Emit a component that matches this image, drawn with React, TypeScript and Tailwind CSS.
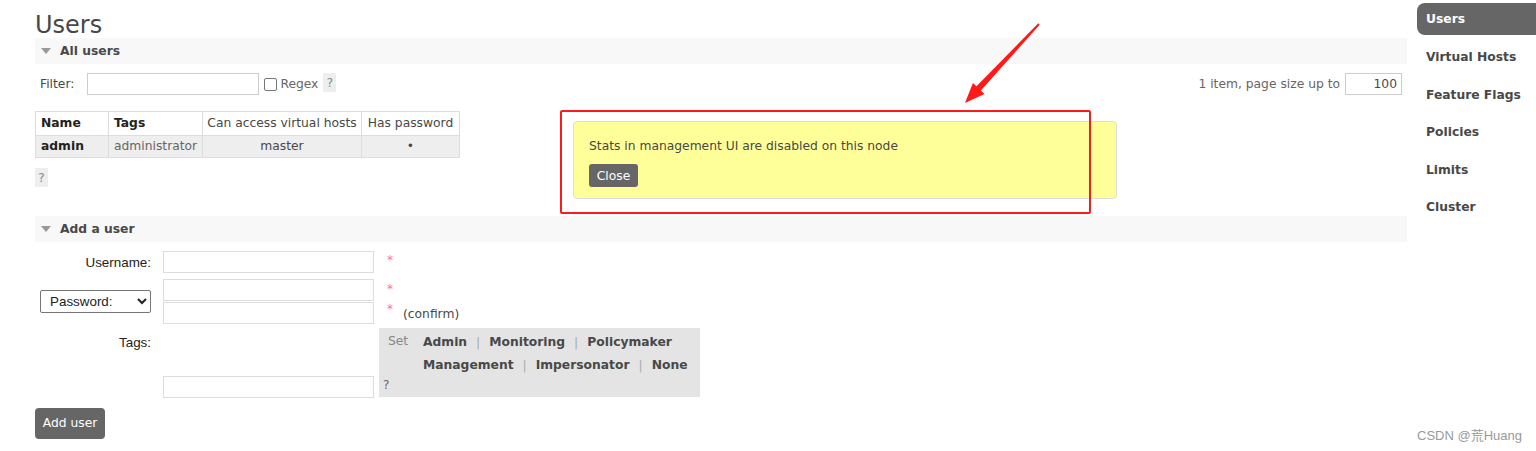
import React from "react";

const nav = ["Users", "Virtual Hosts", "Feature Flags", "Policies", "Limits", "Cluster"];

function SectionBar({ title }: { title: string }) {
  return (
    <div className="h-[26px] bg-[#f8f8f8] flex items-center pl-[6px]">
      <span className="inline-block w-0 h-0 border-l-[5px] border-r-[5px] border-t-[6px] border-l-transparent border-r-transparent border-t-[#999] mr-[9px]" />
      <span className="font-bold text-[12.3px] text-[#484848]">{title}</span>
    </div>
  );
}

function Help() {
  return (
    <span className="inline-flex w-[13px] h-[19px] bg-[#eee] text-[#888] text-[12px] items-center justify-center">?</span>
  );
}

function Field({ className = "" }: { className?: string }) {
  return (
    <input
      className={
        "block w-[211px] h-[22px] border border-[#ddd] bg-white outline-none px-1 " + className
      }
    />
  );
}

function Star({ className = "" }: { className?: string }) {
  return <span className={"text-[#f77] text-[12px] leading-none " + className}>*</span>;
}

const tagRow1 = ["Admin", "Monitoring", "Policymaker"];
const tagRow2 = ["Management", "Impersonator", "None"];

function TagLinks({ items }: { items: string[] }) {
  return (
    <div className="h-[23px] flex items-center">
      {items.map((t, i) => (
        <React.Fragment key={t}>
          {i > 0 && <span className="text-[#aaa] font-normal mx-[9px]">|</span>}
          <span className="font-bold text-[#484848]">{t}</span>
        </React.Fragment>
      ))}
    </div>
  );
}

export default function App() {
  return (
    <div
      className="relative w-[1536px] h-[451px] bg-white overflow-hidden text-[12.3px] text-[#484848]"
      style={{ fontFamily: '"DejaVu Sans", Verdana, sans-serif' }}
    >
      <div className="flex">
        {/* main column */}
        <div className="ml-[35px] w-[1372px]">
          <h1 className="h-[38px] text-[24px] leading-[50px] font-normal text-[#484848]">Users</h1>

          <SectionBar title="All users" />

          <div className="mt-[9px] h-[22px] flex items-center pl-[5px] pr-[5px]">
            <span>Filter:</span>
            <input className="ml-[13px] w-[172px] h-[22px] border border-[#ccc] bg-white outline-none" />
            <span className="ml-[5px] w-[13px] h-[13px] border border-[#767676] rounded-[2px] bg-white" />
            <span className="ml-[3px] text-[#666]">Regex</span>
            <span className="ml-[5px] -mt-[3px]">
              <Help />
            </span>
            <span className="ml-auto text-[#666]">1 item, page size up to</span>
            <input
              defaultValue="100"
              className="ml-[5px] w-[57px] h-[22px] border border-[#ccc] text-right pr-[4px] bg-white text-[#484848] outline-none"
            />
          </div>

          <table className="mt-[16px] border-collapse">
            <thead>
              <tr className="h-[24px]">
                <th className="w-[73px] border border-[#ddd] text-left pl-[5px] font-bold text-[#222]">Name</th>
                <th className="w-[94px] border border-[#ddd] text-left pl-[5px] font-bold text-[#222]">Tags</th>
                <th className="w-[159px] border border-[#ddd] font-normal px-[4px]">Can access virtual hosts</th>
                <th className="w-[98px] border border-[#ddd] font-normal px-[4px]">Has password</th>
              </tr>
            </thead>
            <tbody>
              <tr className="h-[22px] bg-[#eee]">
                <td className="border border-[#ddd] pl-[5px] font-bold text-[#222]">admin</td>
                <td className="border border-[#ddd] pl-[5px] text-[#666]">administrator</td>
                <td className="border border-[#ddd] text-center">master</td>
                <td className="border border-[#ddd] text-center">•</td>
              </tr>
            </tbody>
          </table>

          <div className="mt-[10px] h-[19px]">
            <Help />
          </div>

          <div className="mt-[29px]">
            <SectionBar title="Add a user" />
          </div>

          <div className="mt-[9px]">
            {/* username */}
            <div className="flex items-start">
              <label
                className="w-[116px] h-[22px] text-right flex items-center justify-end text-[13.4px] text-[#222] pt-[2px]"
                style={{ fontFamily: '"Liberation Sans", Arial, sans-serif' }}
              >
                Username:
              </label>
              <Field className="ml-[12px]" />
              <Star className="ml-[13px] mt-[3px]" />
            </div>

            {/* password */}
            <div className="flex items-center mt-[6px]">
              <div className="w-[116px] flex justify-end">
                <select
                  className="w-[111px] h-[23px] border border-[#767676] rounded-[2px] bg-white text-[13.4px] text-[#222] pl-[5px]"
                  style={{ fontFamily: '"Liberation Sans", Arial, sans-serif' }}
                >
                  <option>Password:</option>
                </select>
              </div>
              <div className="ml-[12px] flex flex-col gap-[1px]">
                <Field />
                <Field />
              </div>
              <div className="ml-[13px] flex flex-col h-[45px]">
                <div className="h-[22px] pt-[1px]">
                  <Star />
                </div>
                <div className="h-[23px] pt-[2px] flex items-start">
                  <Star />
                  <span className="ml-[10px] mt-[2px] text-[#484848]">(confirm)</span>
                </div>
              </div>
            </div>

            {/* tags */}
            <div className="flex items-start mt-[5px]">
              <label
                className="w-[116px] text-right pt-[4px] text-[13.4px] text-[#222]"
                style={{ fontFamily: '"Liberation Sans", Arial, sans-serif' }}
              >
                Tags:
              </label>
              <div className="ml-[12px] h-[69px] flex flex-col justify-end">
                <Field />
              </div>
              <div className="ml-[5px] -mt-[1px] w-[321px] h-[69px] bg-[#e4e4e4] flex flex-col">
                <div className="flex pt-[3px]">
                  <span className="ml-[9px] w-[35px] h-[20px] flex items-center text-[#888]">Set</span>
                  <div>
                    <TagLinks items={tagRow1} />
                    <TagLinks items={tagRow2} />
                  </div>
                </div>
                <span className="ml-[4px] -mt-[1px] text-[#666] text-[12px]">?</span>
              </div>
            </div>

            <button className="mt-[10px] w-[70px] h-[31px] bg-[#666] text-white rounded-[4px] text-[12.3px]">
              Add user
            </button>
          </div>
        </div>

        {/* right nav */}
        <ul className="ml-[10px] w-[119px]">
          {nav.map((n) => (
            <li key={n} className="h-[37.5px] flex items-center font-bold">
              {n === "Users" ? (
                <span className="w-full h-[32px] bg-[#666] rounded-l-[8px] text-white flex items-center pl-[9px]">
                  {n}
                </span>
              ) : (
                <span className="pl-[9px] pt-[2px] text-[#484848]">{n}</span>
              )}
            </li>
          ))}
        </ul>
      </div>

      {/* popup warning */}
      <div className="absolute left-[573px] top-[121px] w-[544px] h-[78px] bg-[#ffff99] border border-[#ddd] rounded-[4px] pl-[15px] pt-[15px]">
        <p className="text-[#484848]">Stats in management UI are disabled on this node</p>
        <button className="mt-[9px] w-[49px] h-[23px] bg-[#666] text-white rounded-[3px]">Close</button>
      </div>

      {/* annotation */}
      <div className="absolute left-[560px] top-[110px] w-[531px] h-[104px] border-[2.5px] border-[#ff1a1a] rounded-[2px]" />
      <svg className="absolute left-0 top-0" width="1536" height="451" viewBox="0 0 1536 451">
        <polygon
          points="965,103 972.9,82.9 976.5,86.3 1038.3,23.3 1039.7,24.7 980.9,90.5 984.5,93.9"
          fill="#ff1a1a"
        />
      </svg>

      <span
        className="absolute left-[1417px] top-[426px] text-[13px] text-[#999]"
        style={{ fontFamily: '"Liberation Sans", "Noto Sans CJK SC", sans-serif' }}
      >
        CSDN @荒Huang
      </span>
    </div>
  );
}
